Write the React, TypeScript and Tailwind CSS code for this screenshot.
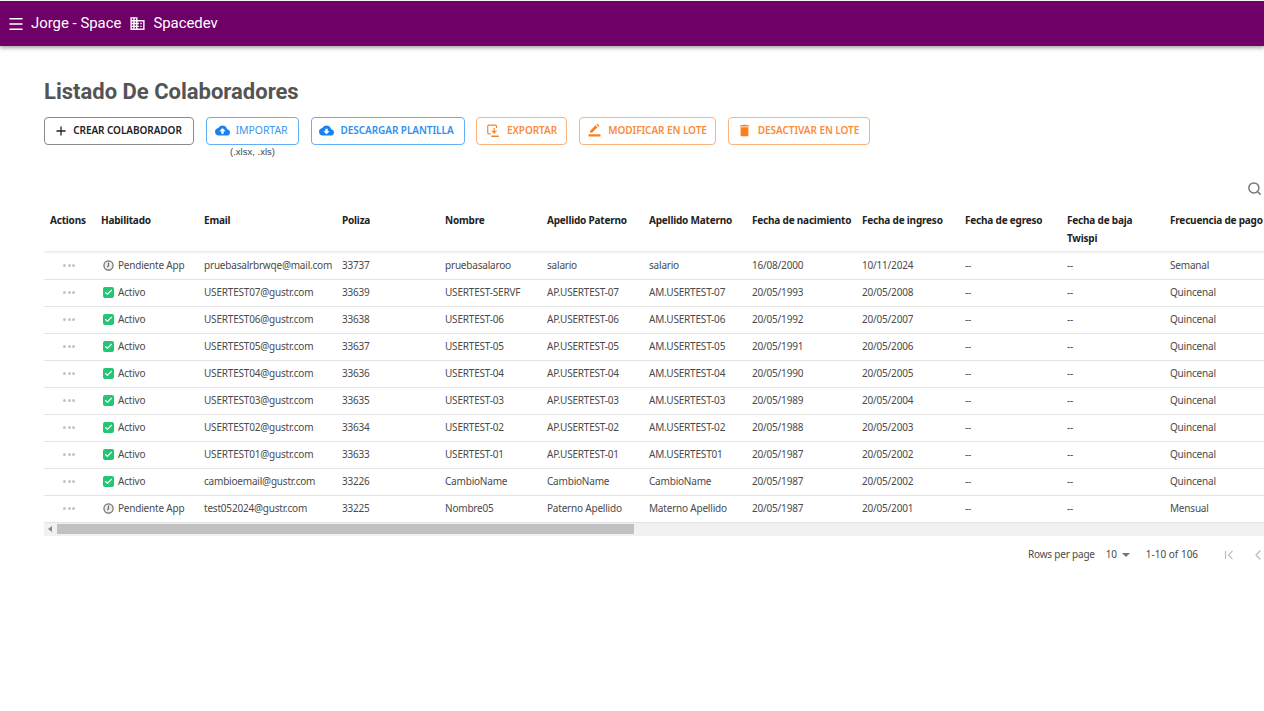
import React from 'react';
import { Menu, Plus, Search, ChevronLeft, Check } from 'lucide-react';

const COLS = [51, 103, 138, 103, 102, 102, 103, 110, 103, 102, 103, 140];

const HEADERS = [
  'Actions',
  'Habilitado',
  'Email',
  'Poliza',
  'Nombre',
  'Apellido Paterno',
  'Apellido Materno',
  'Fecha de nacimiento',
  'Fecha de ingreso',
  'Fecha de egreso',
  'Fecha de baja\nTwispi',
  'Frecuencia de pago',
];

const ROWS = [
  { on: false, email: 'pruebasalrbrwqe@mail.com', poliza: '33737', nombre: 'pruebasalaroo', pat: 'salario', mat: 'salario', nac: '16/08/2000', ing: '10/11/2024', freq: 'Semanal' },
  { on: true, email: 'USERTEST07@gustr.com', poliza: '33639', nombre: 'USERTEST-SERVF', pat: 'AP.USERTEST-07', mat: 'AM.USERTEST-07', nac: '20/05/1993', ing: '20/05/2008', freq: 'Quincenal' },
  { on: true, email: 'USERTEST06@gustr.com', poliza: '33638', nombre: 'USERTEST-06', pat: 'AP.USERTEST-06', mat: 'AM.USERTEST-06', nac: '20/05/1992', ing: '20/05/2007', freq: 'Quincenal' },
  { on: true, email: 'USERTEST05@gustr.com', poliza: '33637', nombre: 'USERTEST-05', pat: 'AP.USERTEST-05', mat: 'AM.USERTEST-05', nac: '20/05/1991', ing: '20/05/2006', freq: 'Quincenal' },
  { on: true, email: 'USERTEST04@gustr.com', poliza: '33636', nombre: 'USERTEST-04', pat: 'AP.USERTEST-04', mat: 'AM.USERTEST-04', nac: '20/05/1990', ing: '20/05/2005', freq: 'Quincenal' },
  { on: true, email: 'USERTEST03@gustr.com', poliza: '33635', nombre: 'USERTEST-03', pat: 'AP.USERTEST-03', mat: 'AM.USERTEST-03', nac: '20/05/1989', ing: '20/05/2004', freq: 'Quincenal' },
  { on: true, email: 'USERTEST02@gustr.com', poliza: '33634', nombre: 'USERTEST-02', pat: 'AP.USERTEST-02', mat: 'AM.USERTEST-02', nac: '20/05/1988', ing: '20/05/2003', freq: 'Quincenal' },
  { on: true, email: 'USERTEST01@gustr.com', poliza: '33633', nombre: 'USERTEST-01', pat: 'AP.USERTEST-01', mat: 'AM.USERTEST01', nac: '20/05/1987', ing: '20/05/2002', freq: 'Quincenal' },
  { on: true, email: 'cambioemail@gustr.com', poliza: '33226', nombre: 'CambioName', pat: 'CambioName', mat: 'CambioName', nac: '20/05/1987', ing: '20/05/2002', freq: 'Quincenal' },
  { on: false, email: 'test052024@gustr.com', poliza: '33225', nombre: 'Nombre05', pat: 'Paterno Apellido', mat: 'Materno Apellido', nac: '20/05/1987', ing: '20/05/2001', freq: 'Mensual' },
];

const CloudUp = ({ className }: { className?: string }) => (
  <svg viewBox="0 0 24 24" className={className} fill="currentColor">
    <path d="M19.35 10.04C18.67 6.59 15.64 4 12 4 9.11 4 6.6 5.64 5.35 8.04 2.34 8.36 0 10.91 0 14c0 3.31 2.69 6 6 6h13c2.76 0 5-2.24 5-5 0-2.64-2.05-4.78-4.65-4.96zM14 13v4h-4v-4H7l5-5 5 5h-3z" />
  </svg>
);

const CloudDown = ({ className }: { className?: string }) => (
  <svg viewBox="0 0 24 24" className={className} fill="currentColor">
    <path d="M19.35 10.04C18.67 6.59 15.64 4 12 4 9.11 4 6.6 5.64 5.35 8.04 2.34 8.36 0 10.91 0 14c0 3.31 2.69 6 6 6h13c2.76 0 5-2.24 5-5 0-2.64-2.05-4.78-4.65-4.96zM17 13l-5 5-5-5h3V9h4v4h3z" />
  </svg>
);

const ExportIcon = ({ className }: { className?: string }) => (
  <svg viewBox="0 0 24 24" className={className} fill="none" stroke="currentColor" strokeWidth="2">
    <path d="M8 17H5a2 2 0 0 1-2-2V4a2 2 0 0 1 2-2h11a2 2 0 0 1 2 2v3" />
    <path d="M14 7v8m-4-3.500 4 4 4-4" />
    <path d="M9 21h13" strokeWidth="2.500" />
  </svg>
);

const EditBar = ({ className }: { className?: string }) => (
  <svg viewBox="0 0 24 24" className={className} fill="currentColor">
    <path d="M1 19h22v4H1v-4zm3-3v-3.500L14 2.500 17.500 6l-10 10H4zM15.500 1l1-1c.4-.4 1-.4 1.400 0l2.600 2.600c.4.400.4 1 0 1.400l-1 1L15.500 1z" />
  </svg>
);

const TrashIcon = ({ className }: { className?: string }) => (
  <svg viewBox="4 2 16 20" className={className} fill="currentColor">
    <path d="M6 19c0 1.100.9 2 2 2h8c1.100 0 2-.9 2-2V7H6v12zM19 4h-3.500l-1-1h-5l-1 1H5v2h14V4z" />
  </svg>
);

const PendingIcon = () => (
  <svg viewBox="0 0 12 12" className="h-[11px] w-[11px]" fill="#ececec" stroke="#6e6e6e">
    <circle cx="6" cy="6" r="5" strokeWidth="1.300" />
    <path d="M6 2.800v3.400L4.600 7.800" strokeWidth="1.300" fill="none" />
  </svg>
);

const FirstPage = ({ className }: { className?: string }) => (
  <svg viewBox="0 0 24 24" className={className} fill="none" stroke="currentColor" strokeWidth="2">
    <path d="M6 5v14" />
    <path d="M18 5l-7 7 7 7" />
  </svg>
);

const Status = ({ on }: { on: boolean }) =>
  on ? (
    <div className="flex items-center">
      <span className="mr-[4px] ml-[2px] flex h-[11px] w-[11px] shrink-0 items-center justify-center rounded-[2px] bg-[#22c673]">
        <Check className="h-[9px] w-[9px] text-white" strokeWidth={3} />
      </span>
      <span>Activo</span>
    </div>
  ) : (
    <div className="flex items-center">
      <span className="mr-[4px] ml-[2px] flex h-[11px] w-[11px] shrink-0 items-center justify-center">
        <PendingIcon />
      </span>
      <span>Pendiente App</span>
    </div>
  );

const Dots = () => (
  <div className="flex gap-[1.500px] pl-[13px]">
    <span className="h-[3px] w-[3px] rounded-full bg-[#c4c4c4]" />
    <span className="h-[3px] w-[3px] rounded-full bg-[#c4c4c4]" />
    <span className="h-[3px] w-[3px] rounded-full bg-[#c4c4c4]" />
  </div>
);

const ToolbarButton = ({
  label,
  icon,
  className,
}: {
  label: string;
  icon: React.ReactNode;
  className: string;
}) => (
  <button
    type="button"
    className={`flex h-[28px] shrink-0 items-center justify-center rounded-[4px] border pb-px whitespace-nowrap ${className}`}
  >
    {icon}
    {label}
  </button>
);

export default function App() {
  return (
    <div className="h-[711px] w-[1264px] overflow-hidden bg-white font-['Noto_Sans',sans-serif] text-[#4a4a4a]">
      <header className="mt-px flex h-[45px] items-center bg-[#6f0068] pl-[7px] font-['Roboto',sans-serif] text-[14.9px] text-white shadow-[0_2px_4px_rgba(0,0,0,0.35)]">
        <Menu className="h-[18px] w-[18px] shrink-0" strokeWidth={2} />
        <span className="ml-[6px]">Jorge - Space</span>
        <svg viewBox="0 0 24 24" className="ml-[8px] h-[17px] w-[17px]" fill="currentColor">
          <path d="M12 7V3H2v18h20V7H12zM6 19H4v-2h2v2zm0-4H4v-2h2v2zm0-4H4V9h2v2zm0-4H4V5h2v2zm4 12H8v-2h2v2zm0-4H8v-2h2v2zm0-4H8V9h2v2zm0-4H8V5h2v2zm10 12h-8v-2h2v-2h-2v-2h2v-2h-2V9h8v10zm-2-8h-2v2h2v-2zm0 4h-2v2h2v-2z" />
        </svg>
        <span className="ml-[7px]">Spacedev</span>
      </header>

      <main className="pt-[33px] pl-[44px]">
        <h1 className="font-['Roboto',sans-serif] text-[22px] leading-[26px] font-bold text-[#545454]">
          Listado De Colaboradores
        </h1>

        <div className="mt-[12px] flex h-[42px] items-start gap-[12px] text-[10px] tracking-[-0.06px]">
          <ToolbarButton
            label="CREAR COLABORADOR"
            icon={<Plus className="h-[14px] w-[14px] shrink-0" strokeWidth={2.2} />}
            className="w-[150px] gap-[5px] pr-[2px] border-[#8a8a8a] font-semibold text-[#222222]"
          />
          <div className="flex w-[93px] shrink-0 flex-col items-center">
            <ToolbarButton
              label="IMPORTAR"
              icon={<CloudUp className="h-[15px] w-[15px] shrink-0 text-[#1a82f0]" />}
              className="w-full gap-[5px] pr-[2px] border-[#62aef7] text-[10.5px] font-normal text-[#3a97f5]"
            />
            <span className="mt-px font-['Liberation_Sans',sans-serif] text-[9.5px] leading-[11px] tracking-normal text-[#444444]">
              (.xlsx, .xls)
            </span>
          </div>
          <ToolbarButton
            label="DESCARGAR PLANTILLA"
            icon={<CloudDown className="h-[15px] w-[15px] shrink-0 text-[#1a82f0]" />}
            className="w-[154px] gap-[6px] pr-[3px] border-[#62aef7] font-semibold text-[#2f8ff2]"
          />
          <ToolbarButton
            label="EXPORTAR"
            icon={<ExportIcon className="h-[14px] w-[14px] shrink-0 text-[#fb7f1f]" />}
            className="-ml-px w-[91px] gap-[7px] border-[#fbb27b] font-semibold text-[#fb8c3c]"
          />
          <ToolbarButton
            label="MODIFICAR EN LOTE"
            icon={<EditBar className="h-[13px] w-[13px] shrink-0 text-[#fb7f1f]" />}
            className="w-[137px] gap-[7px] border-[#fbb27b] font-semibold text-[#fb8c3c]"
          />
          <ToolbarButton
            label="DESACTIVAR EN LOTE"
            icon={<TrashIcon className="h-[13px] w-[11px] shrink-0 text-[#fb7f1f]" />}
            className="w-[142px] gap-[8px] border-[#fbb27b] font-semibold text-[#fb8c3c]"
          />
        </div>

        <div className="mt-[15px] flex h-[28px] items-center justify-end pr-[2px]">
          <Search className="h-[15px] w-[15px] text-[#777777]" strokeWidth={2.4} />
        </div>

        <div className="mt-[5px] overflow-hidden">
          <table className="w-[1260px] table-fixed border-collapse text-[10px] tracking-[-0.2px]">
            <colgroup>
              {COLS.map((w, i) => (
                <col key={i} style={{ width: w }} />
              ))}
            </colgroup>
            <thead>
              <tr className="h-[44px] shadow-[0_1px_3px_rgba(0,0,0,0.12)]">
                {HEADERS.map((h) => (
                  <th
                    key={h}
                    className="pt-[4px] pr-0 pl-[6px] text-left align-top leading-[18px] font-bold whitespace-pre text-[#222222]"
                  >
                    {h}
                  </th>
                ))}
              </tr>
            </thead>
            <tbody>
              {ROWS.map((r, i) => (
                <tr
                  key={r.email}
                  className={`border-b border-[#e4e4e4] whitespace-nowrap ${i === 0 ? 'h-[28px] [&>td]:pt-px' : 'h-[27px]'}`}
                >
                  <td className="px-[6px]">
                    <Dots />
                  </td>
                  <td className="px-[6px]">
                    <Status on={r.on} />
                  </td>
                  <td className="px-[6px]">{r.email}</td>
                  <td className="px-[6px]">{r.poliza}</td>
                  <td className="px-[6px]">{r.nombre}</td>
                  <td className="px-[6px]">{r.pat}</td>
                  <td className="px-[6px]">{r.mat}</td>
                  <td className="px-[6px]">{r.nac}</td>
                  <td className="px-[6px]">{r.ing}</td>
                  <td className="px-[6px]">--</td>
                  <td className="px-[6px]">--</td>
                  <td className="px-[6px]">{r.freq}</td>
                </tr>
              ))}
            </tbody>
          </table>
          <div className="flex h-[13px] items-center bg-[#f1f1f1]">
            <span className="ml-[4px] h-0 w-0 border-y-[3px] border-r-[4px] border-y-transparent border-r-[#8a8a8a]" />
            <div className="ml-[5px] h-[10px] w-[577px] bg-[#c1c1c1]" />
          </div>
        </div>

        <div className="mt-[9px] flex h-[20px] items-center pl-[984px] text-[10px] tracking-[-0.2px] whitespace-nowrap">
          <span>Rows per page</span>
          <span className="ml-[11px]">10</span>
          <span className="ml-[5px] h-0 w-0 border-x-[4px] border-t-[4px] border-x-transparent border-t-[#757575]" />
          <span className="ml-[16px] tracking-normal">1-10 of 106</span>
          <FirstPage className="ml-[24px] h-[14px] w-[14px] shrink-0 text-[#bdbdbd]" />
          <ChevronLeft className="ml-[14px] h-[16px] w-[16px] shrink-0 text-[#bdbdbd]" strokeWidth={2} />
        </div>
      </main>
    </div>
  );
}
